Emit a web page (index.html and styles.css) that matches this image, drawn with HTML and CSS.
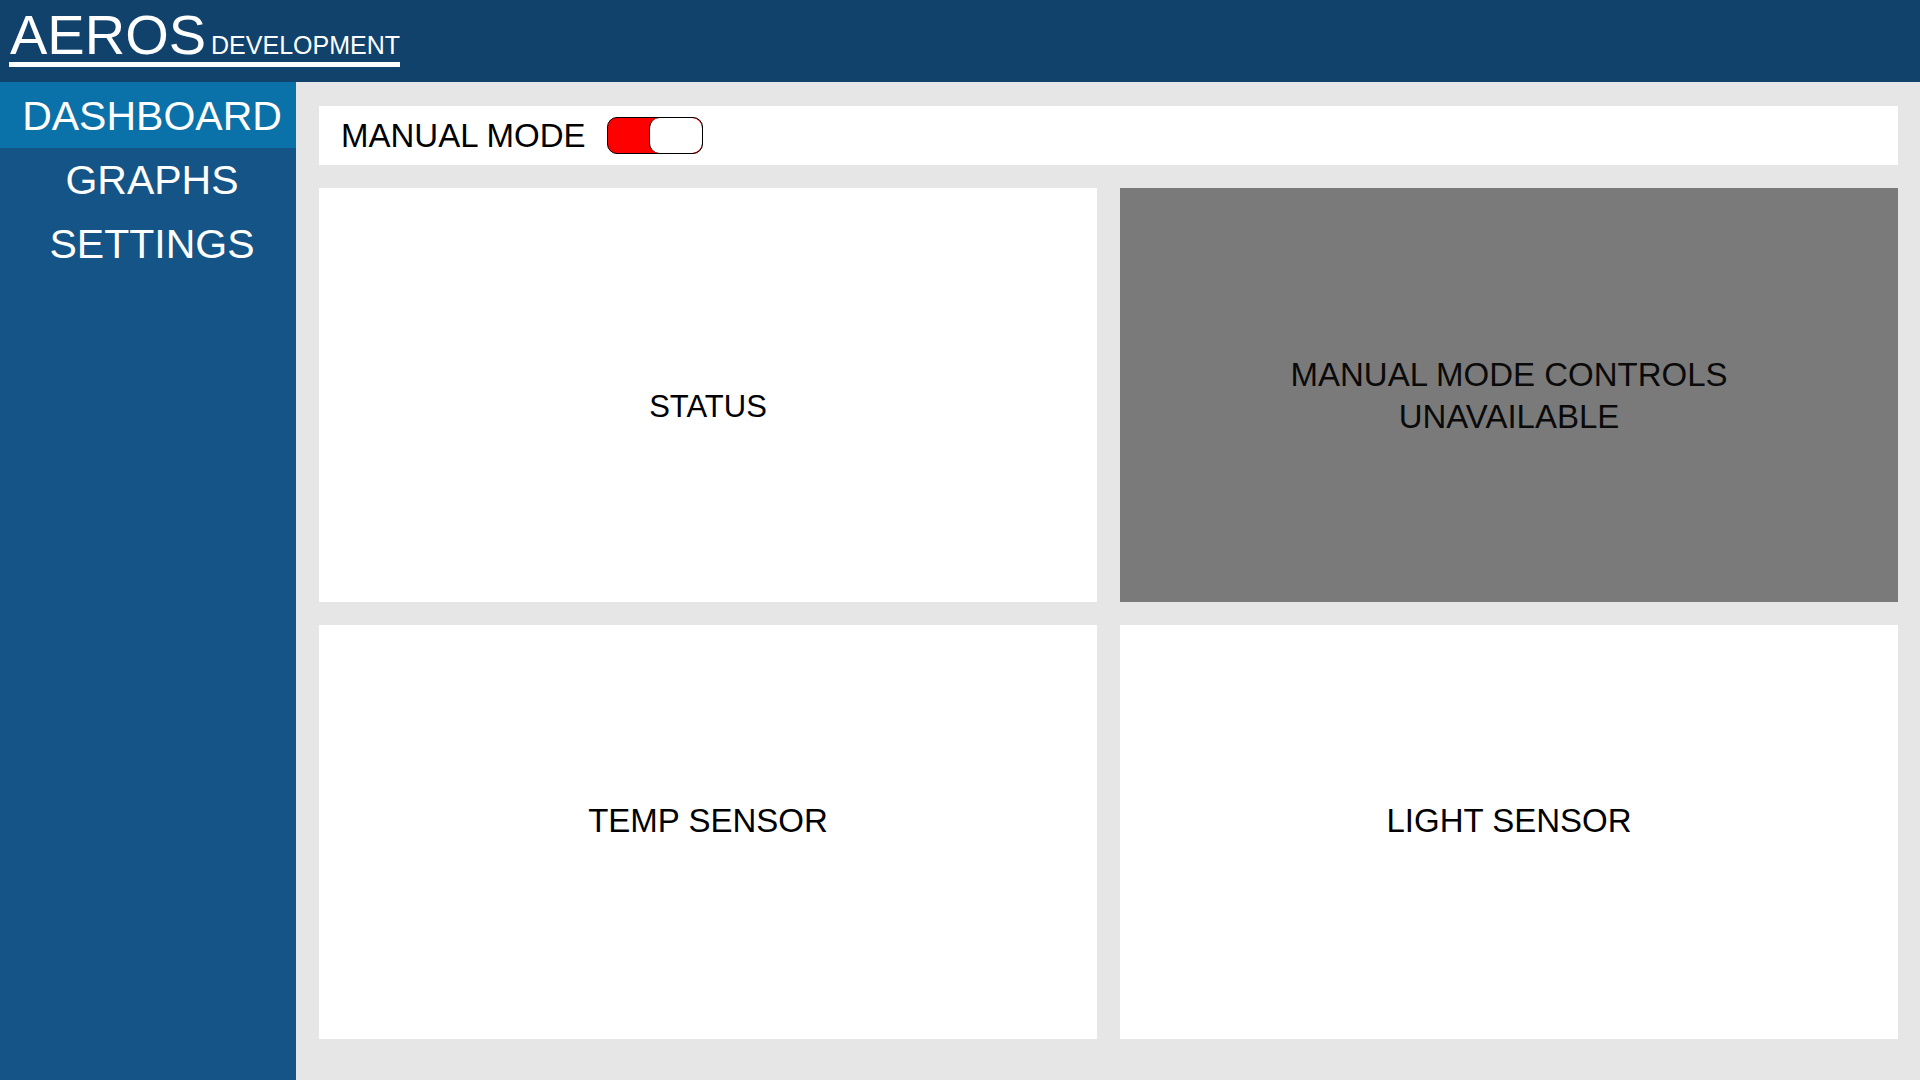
FILE: index.html
```html
<!DOCTYPE html>
<html lang="en">
<head>
<meta charset="utf-8">
<title>AEROS Development - Dashboard</title>
<link rel="stylesheet" href="styles.css">
</head>
<body>
<header class="topbar">
  <a class="logo" href="#">
    <span class="logo-main">AEROS</span>
    <span class="logo-sub">DEVELOPMENT</span>
  </a>
</header>
<div class="layout">
  <nav class="sidebar">
    <a class="nav-item active" href="#">DASHBOARD</a>
    <a class="nav-item" href="#">GRAPHS</a>
    <a class="nav-item" href="#">SETTINGS</a>
  </nav>
  <main class="content">
    <div class="mode-bar">
      <span class="mode-label">MANUAL MODE</span>
      <span class="toggle"><span class="toggle-knob"></span></span>
    </div>
    <div class="grid">
      <section class="card card-status">STATUS</section>
      <section class="card card-disabled">MANUAL MODE CONTROLS<br>UNAVAILABLE</section>
      <section class="card card-low">TEMP SENSOR</section>
      <section class="card card-low">LIGHT SENSOR</section>
    </div>
  </main>
</div>
</body>
</html>
```
FILE: styles.css
```css
* { box-sizing: border-box; }
html, body { margin: 0; height: 100%; }
body {
  font-family: "Liberation Sans", Arial, sans-serif;
  background: #e6e6e6;
  color: #000;
  display: flex;
  flex-direction: column;
  overflow: hidden;
}
.topbar {
  height: 82px;
  flex: 0 0 82px;
  background: #11426c;
  padding: 8px 0 0 9px;
}
.logo {
  display: inline-flex;
  align-items: baseline;
  color: #fff;
  text-decoration: none;
  border-bottom: 5px solid #fff;
}
.logo-main {
  font-size: 56px;
  line-height: 54px;
  margin-left: 1px;
}
.logo-sub {
  font-size: 25px;
  margin-left: 5px;
}
.layout {
  flex: 1;
  display: flex;
  min-height: 0;
}
.sidebar {
  width: 296px;
  flex: 0 0 296px;
  background: #145487;
  display: flex;
  flex-direction: column;
}
.nav-item {
  height: 65px;
  display: flex;
  align-items: center;
  justify-content: center;
  padding: 2px 0 0 8px;
  color: #fff;
  text-decoration: none;
  font-size: 41px;
}
.nav-item.active {
  background: #0b71a9;
  height: 66px;
}
.nav-item + .nav-item { margin-top: -1px; }
.content {
  flex: 1;
  display: flex;
  flex-direction: column;
  gap: 23px;
  padding: 24px 22px 41px 23px;
}
.mode-bar {
  height: 59px;
  flex: 0 0 59px;
  background: #fff;
  display: flex;
  align-items: center;
  padding-left: 22px;
}
.mode-label {
  font-size: 33px;
}
.toggle {
  margin-left: 22px;
  width: 96px;
  height: 37px;
  border: 1px solid #000;
  border-radius: 10px;
  background: #ff0000;
  display: flex;
  justify-content: flex-end;
  overflow: hidden;
}
.toggle-knob {
  width: 53px;
  height: 100%;
  background: #fff;
  border-left: 1px solid #000;
  border-radius: 10px;
}
.grid {
  flex: 1;
  display: grid;
  grid-template-columns: 1fr 1fr;
  grid-template-rows: 1fr 1fr;
  gap: 23px;
}
.card {
  background: #fff;
  display: flex;
  align-items: center;
  justify-content: center;
  text-align: center;
  font-size: 33px;
}
.card-status {
  font-size: 31px;
  padding-top: 23px;
}
.card-low {
  padding-bottom: 23px;
}
.card-disabled {
  background: #7a7a7a;
  color: #0a0a0a;
  line-height: 42px;
  padding-top: 2px;
}
```
